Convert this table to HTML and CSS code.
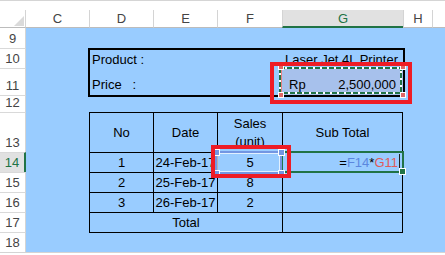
FILE: index.html
```html
<!DOCTYPE html>
<html lang="en">
<head>
  <meta charset="UTF-8">
  <title>Sales</title>
  <link rel="stylesheet" href="styles.css">
</head>
<body>
  <div class="excel">
    <div class="topbar"></div>

    <div class="sheet">
      <div class="corner"></div>
      <div class="col-hdr">C</div>
      <div class="col-hdr">D</div>
      <div class="col-hdr">E</div>
      <div class="col-hdr">F</div>
      <div class="col-hdr on">G</div>
      <div class="col-hdr">H</div>
      <div class="col-hdr"></div>

      <div class="row-hdr">9</div>
      <div class="row-hdr">10</div>
      <div class="row-hdr">11</div>
      <div class="row-hdr">12</div>
      <div class="row-hdr">13</div>
      <div class="row-hdr on">14</div>
      <div class="row-hdr">15</div>
      <div class="row-hdr">16</div>
      <div class="row-hdr">17</div>
      <div class="row-hdr">18</div>

      <!-- product / price box -->
      <div class="info">
        <div class="lbl">Product :</div>
        <div class="lbl name">Laser Jet 4L Printer</div>
        <div class="lbl low">Price   :</div>
        <div class="price"><span>Rp</span><span>2,500,000</span></div>
      </div>

      <!-- sales table -->
      <div class="sales">
        <div class="cell">No</div>
        <div class="cell">Date</div>
        <div class="cell two">Sales<br>(unit)</div>
        <div class="cell">Sub Total</div>

        <div class="cell">1</div>
        <div class="cell">24-Feb-17</div>
        <div class="cell">5</div>
        <div class="cell formula">=<span class="ref-f">F14</span>*<span class="ref-g">G11</span></div>

        <div class="cell">2</div>
        <div class="cell">25-Feb-17</div>
        <div class="cell">8</div>
        <div class="cell"></div>

        <div class="cell">3</div>
        <div class="cell">26-Feb-17</div>
        <div class="cell">2</div>
        <div class="cell"></div>

        <div class="cell total">Total</div>
        <div class="cell"></div>
      </div>
    </div>

    <!-- selection marks drawn over the cells -->
    <svg class="sel" width="445" height="255" viewBox="0 0 445 255">
      <!-- G11 reference + copy marquee -->
      <rect x="281.5" y="68.5" width="120" height="25" fill="none" stroke="#e88080"/>
      <rect x="280" y="68" width="121" height="25" fill="none" stroke="#fff" stroke-width="2"/>
      <rect x="280" y="68" width="121" height="25" fill="none" stroke="#217346" stroke-width="2" stroke-dasharray="5 2"/>
      <rect x="278.5" y="64.5" width="5" height="5" fill="#e06666" stroke="#fff"/>
      <rect x="400.5" y="64.5" width="5" height="5" fill="#e06666" stroke="#fff"/>
      <rect x="278.5" y="92.5" width="5" height="5" fill="#e06666" stroke="#fff"/>
      <rect x="400.5" y="92.5" width="5" height="5" fill="#e06666" stroke="#fff"/>

      <!-- G14 active cell -->
      <rect x="282" y="152" width="121" height="20" fill="none" stroke="#217346" stroke-width="2"/>
      <line x1="399.5" y1="154" x2="399.5" y2="170" stroke="#222"/>
      <rect x="399.5" y="168.5" width="6" height="6" fill="#217346" stroke="#fff"/>

      <!-- F14 reference -->
      <rect x="216" y="152" width="65" height="21" fill="none" stroke="#7396e2" stroke-width="2"/>
      <rect x="217.5" y="153.5" width="62" height="18" fill="none" stroke="#fff" stroke-opacity="0.7"/>
      <rect x="213.5" y="149.5" width="6" height="6" fill="#7396e2" stroke="#fff"/>
      <rect x="278.5" y="149.5" width="6" height="6" fill="#7396e2" stroke="#fff"/>
      <rect x="213.5" y="170.5" width="6" height="6" fill="#7396e2" stroke="#fff"/>
      <rect x="278.5" y="170.5" width="6" height="6" fill="#7396e2" stroke="#fff"/>
    </svg>

    <div class="mark mark-price"></div>
    <div class="mark mark-sales"></div>
  </div>
</body>
</html>
```

FILE: styles.css
```css
body {
  margin: 0;
  font-family: "Liberation Sans", Arial, sans-serif;
  font-size: 13px;
  color: #000;
  background-color: #fff;
}

.excel {
  position: relative;
  width: 445px;
  height: 255px;
  overflow: hidden;
}

.topbar {
  height: 10px;
  box-sizing: border-box;
  border-top: 1px solid #d5d5d5;
}

.sheet {
  display: grid;
  grid-template-columns: 26px 63px 64px 64px 65px 121px 29px 1fr;
  grid-template-rows: 18px 20px 20px 27px 17px 40px 20px 20px 20px 20px 20px;
  background-color: #99ccff;
  border-bottom: 1px solid #d4d4d4;
}

/* headers */
.corner {
  position: relative;
  background-color: #fff;
  border-right: 1px solid #d4d4d4;
  border-bottom: 1px solid #bcbcbc;
}

.corner::after {
  content: "";
  position: absolute;
  right: 1px;
  bottom: 1px;
  width: 10px;
  height: 10px;
  background-color: #dadada;
  clip-path: polygon(100% 0, 100% 100%, 0 100%);
}

.col-hdr {
  background-color: #fff;
  border-left: 1px solid #d4d4d4;
  border-bottom: 1px solid #bcbcbc;
  color: #444;
  text-align: center;
  line-height: 17px;
}

.corner + .col-hdr {
  border-left: 0;
}

.col-hdr.on {
  background-color: #e1e1e1;
  color: #217346;
  border-bottom: 2px solid #217346;
}

.row-hdr {
  grid-column: 1;
  box-sizing: border-box;
  display: flex;
  align-items: flex-end;
  justify-content: center;
  padding-bottom: 2px;
  background-color: #fff;
  border-top: 1px solid #d9d9d9;
  border-right: 1px solid #d4d4d4;
  color: #444;
  line-height: 15px;
}

.col-hdr + .row-hdr {
  border-top: 0;
}

.row-hdr.on {
  background-color: #e1e1e1;
  color: #217346;
  border-right: 2px solid #217346;
}

/* product box */
.info {
  grid-column: 3 / 7;
  grid-row: 3 / 5;
  margin: 0 -2px -2px -1px;
  border: 2px solid #000;
  display: grid;
  grid-template-columns: 192px 1fr;
  grid-template-rows: 18px 27px;
}

.info .lbl {
  display: flex;
  align-items: flex-end;
  padding: 0 0 1px 2px;
  line-height: 15px;
  white-space: pre;
}

.info .name {
  padding-left: 3px;
}

.info .low {
  padding-bottom: 3px;
}

.info .price {
  display: flex;
  justify-content: space-between;
  align-items: flex-end;
  padding: 0 7px 3px 7px;
  line-height: 15px;
  background-color: #a7c1ec;
}

/* sales table */
.sales {
  grid-column: 3 / 7;
  grid-row: 6 / 11;
  margin-bottom: -1px;
  border-right: 1px solid #000;
  border-bottom: 1px solid #000;
  display: grid;
  grid-template-columns: 64px 64px 65px 1fr;
  grid-template-rows: 40px repeat(4, 20px);
}

.cell {
  display: flex;
  align-items: center;
  justify-content: center;
  border-top: 1px solid #000;
  border-left: 1px solid #000;
  line-height: 15px;
  text-align: center;
  white-space: nowrap;
}

.cell.two {
  line-height: 18px;
}

.cell.total {
  grid-column: span 3;
}

.cell.formula {
  justify-content: flex-end;
  padding-right: 4px;
}

.ref-f {
  color: #5b87de;
}

.ref-g {
  color: #e05a5a;
}

/* marks over the sheet */
.sel {
  position: absolute;
  left: 0;
  top: 0;
  pointer-events: none;
}

.mark {
  position: absolute;
  box-sizing: border-box;
  border: 4px solid #ee1c25;
}

.mark-price {
  left: 270px;
  top: 62px;
  width: 142px;
  height: 42px;
}

.mark-sales {
  left: 211px;
  top: 145px;
  width: 80px;
  height: 33px;
}
```
